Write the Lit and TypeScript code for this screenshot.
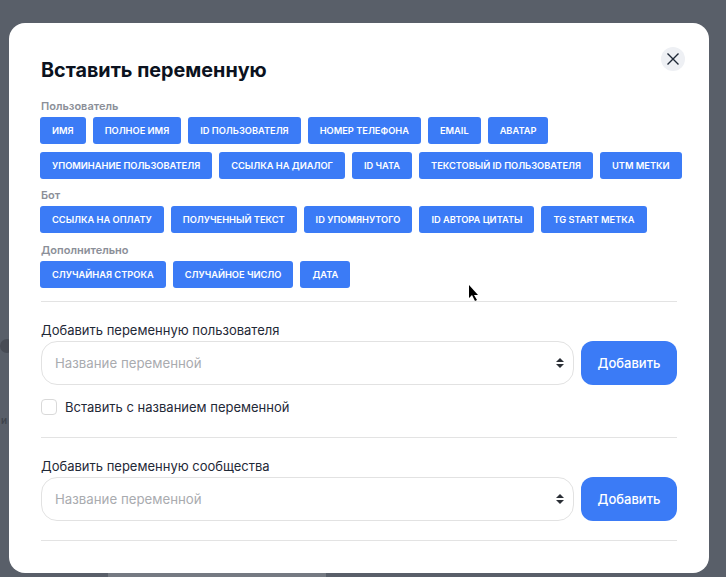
import { LitElement, html, css } from 'lit';
import { customElement } from 'lit/decorators.js';

const GROUPS = [
  {
    title: 'Пользователь',
    items: [
      'Имя', 'Полное имя', 'ID пользователя', 'Номер телефона', 'Email', 'Аватар',
      'Упоминание пользователя', 'Ссылка на диалог', 'ID чата', 'Текстовый ID пользователя', 'UTM метки',
    ],
  },
  {
    title: 'Бот',
    items: ['Ссылка на оплату', 'Полученный текст', 'ID упомянутого', 'ID автора цитаты', 'TG start метка'],
  },
  {
    title: 'Дополнительно',
    items: ['Случайная строка', 'Случайное число', 'Дата'],
  },
];

@customElement('app-root')
export class AppRoot extends LitElement {
  static styles = css`
    :host {
      display: block;
      height: 577px;
      overflow: hidden;
      background: #595f69;
      font-family: Inter, 'Noto Sans', sans-serif;
      position: relative;
    }
    .backdrop-dot {
      position: absolute;
      left: 0;
      top: 339px;
      width: 14px;
      height: 14px;
      border-radius: 50%;
      background: #484c55;
    }
    .backdrop-text {
      position: absolute;
      left: 1px;
      top: 413px;
      font-size: 10px;
      line-height: 14px;
      font-weight: 600;
      color: #3f444d;
    }
    .backdrop-strip {
      position: absolute;
      left: 108px;
      bottom: 0;
      width: 218px;
      height: 4px;
      background: #757a82;
    }
    .wrap {
      padding: 23px 17px 0 9px;
    }
    .modal {
      position: relative;
      height: 550px;
      box-sizing: border-box;
      background: #fff;
      border-radius: 16px;
      padding: 32px;
      overflow: hidden;
    }
    h3 {
      margin: 1px 0 14px;
      font-size: 19.75px;
      line-height: 28px;
      font-weight: 700;
      color: #0b1220;
    }
    .close {
      position: absolute;
      top: 24px;
      right: 24px;
      width: 24px;
      height: 24px;
      padding: 0;
      border: none;
      border-radius: 50%;
      background: #eef0f4;
      display: flex;
      align-items: center;
      justify-content: center;
      color: #1f2937;
    }
    .group-title {
      margin-bottom: 3px;
      font-size: 11px;
      line-height: 16px;
      font-weight: 600;
      color: #8b8f98;
    }
    .chips {
      display: flex;
      flex-wrap: wrap;
      gap: 8px 7px;
      margin: 0 -8px 8.25px -1px;
    }
    .chip {
      height: 27px;
      padding: 0 12px;
      border: none;
      border-radius: 3px;
      background: #3b7bf6;
      color: #fff;
      font-family: inherit;
      font-size: 9.27px;
      font-weight: 600;
      text-transform: uppercase;
    }
    .divider {
      height: 1px;
      background: #e3e3e3;
    }
    .first {
      margin-top: 13.5px;
    }
    .section-label {
      margin-top: 19px;
      font-size: 13px;
      line-height: 18px;
      color: #1f2937;
    }
    .row {
      display: flex;
      gap: 7px;
      margin-top: 2px;
    }
    .select {
      flex: 1;
      height: 44px;
      box-sizing: border-box;
      border: 1px solid #e2e2e2;
      border-radius: 16px;
      padding: 0 8px 0 13px;
      display: flex;
      align-items: center;
      justify-content: space-between;
      font-size: 13.25px;
      color: #a9abaf;
    }
    .add {
      width: 96px;
      height: 44px;
      border: none;
      border-radius: 12px;
      background: #3b7bf6;
      color: #fff;
      font-family: inherit;
      font-size: 13px;
      font-weight: 500;
    }
    .check {
      display: flex;
      align-items: center;
      gap: 8px;
      margin: 13px 0 21px;
      font-size: 13px;
      line-height: 18px;
      color: #1f2937;
    }
    .box {
      width: 16px;
      height: 16px;
      box-sizing: border-box;
      border: 1px solid #d9d9d9;
      border-radius: 4px;
    }
    .last {
      margin-top: 19px;
    }
    .cursor {
      position: absolute;
      left: 468px;
      top: 284px;
    }
  `;

  private renderAddRow() {
    return html`
      <div class="row">
        <div class="select">
          <span>Название переменной</span>
          <svg width="10" height="12" viewBox="0 0 10 12">
            <path d="M5 1 9 5H1zM5 11 1 7h8z" fill="#2b2f36"></path>
          </svg>
        </div>
        <button class="add">Добавить</button>
      </div>
    `;
  }

  render() {
    return html`
      <div class="backdrop-dot"></div>
      <div class="backdrop-text">и</div>
      <div class="backdrop-strip"></div>
      <div class="wrap">
        <div class="modal">
          <button class="close">
            <svg width="14" height="14" viewBox="0 0 14 14">
              <path d="M1.5 1.5l11 11M12.5 1.5l-11 11" stroke="currentColor" stroke-width="1.4" fill="none"></path>
            </svg>
          </button>
          <h3>Вставить переменную</h3>
          ${GROUPS.map(
            (group) => html`
              <div class="group-title">${group.title}</div>
              <div class="chips">
                ${group.items.map((item) => html`<button class="chip">${item}</button>`)}
              </div>
            `
          )}
          <div class="divider first"></div>
          <div class="section-label">Добавить переменную пользователя</div>
          ${this.renderAddRow()}
          <label class="check"><span class="box"></span>Вставить с названием переменной</label>
          <div class="divider"></div>
          <div class="section-label">Добавить переменную сообщества</div>
          ${this.renderAddRow()}
          <div class="divider last"></div>
        </div>
      </div>
      <svg class="cursor" width="12" height="18" viewBox="0 0 12 18">
        <path d="M1 1v13l3-3 3 6 2-1-3-5h4z" fill="#000"></path>
      </svg>
    `;
  }
}
